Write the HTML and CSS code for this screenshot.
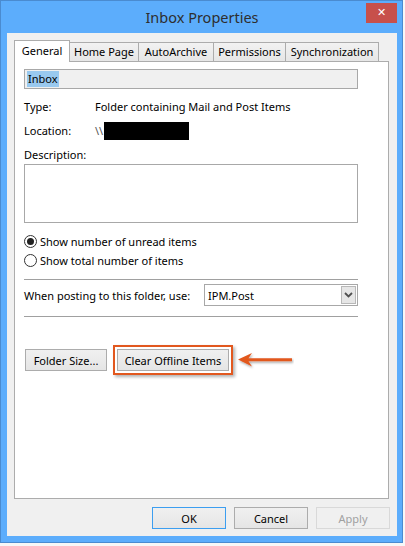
FILE: index.html
```html
<!DOCTYPE html>
<html lang="en">
<head>
    <meta charset="UTF-8">
    <title>Inbox Properties</title>
    <link rel="stylesheet" href="styles.css">
</head>
<body>
    <div class="window">
        <div class="titlebar">
            <span></span>
            <div class="title">Inbox Properties</div>
            <div class="close-wrap"><button class="close">&#x2715;</button></div>
        </div>

        <div class="client">
            <div class="tabs">
                <div class="tab active">General</div>
                <div class="tab">Home Page</div>
                <div class="tab">AutoArchive</div>
                <div class="tab">Permissions</div>
                <div class="tab">Synchronization</div>
            </div>

            <div class="panel">
                <div class="name-field"><span class="selected">Inbox</span></div>

                <div class="info-row">
                    <span class="info-label">Type:</span>
                    <span>Folder containing Mail and Post Items</span>
                </div>
                <div class="info-row">
                    <span class="info-label">Location:</span>
                    <span class="location">\\<span class="redacted"></span></span>
                </div>

                <div class="desc-label">Description:</div>
                <div class="textarea"></div>

                <div class="radio-row first">
                    <span class="radio checked"></span>
                    <span>Show number of unread items</span>
                </div>
                <div class="radio-row">
                    <span class="radio"></span>
                    <span>Show total number of items</span>
                </div>

                <div class="separator"></div>

                <div class="posting-row">
                    <span class="posting-label">When posting to this folder, use:</span>
                    <div class="select">
                        <span>IPM.Post</span>
                        <span class="select-btn">
                            <svg width="9" height="6" viewBox="0 0 9 6"><path d="M1 1 L4.5 4.5 L8 1" fill="none" stroke="#505050" stroke-width="1.8"/></svg>
                        </span>
                    </div>
                </div>

                <div class="separator second"></div>

                <div class="action-row">
                    <button class="btn size-btn">Folder Size...</button>
                    <span class="highlight"><button class="btn clear-btn">Clear Offline Items</button></span>
                    <svg class="arrow" width="58" height="22" viewBox="0 0 58 22">
                        <defs>
                            <filter id="shadow" x="-20%" y="-40%" width="140%" height="200%">
                                <feDropShadow dx="1" dy="1.5" stdDeviation="1" flood-color="#000" flood-opacity="0.35"/>
                            </filter>
                        </defs>
                        <path d="M2 10.5 L16 4 L12.5 9.3 L56 9.3 L56 12.2 L12.5 12.2 L16 17.5 Z" fill="#e2581f" filter="url(#shadow)"/>
                    </svg>
                </div>
            </div>

            <div class="dialog-buttons">
                <button class="btn dlg default">OK</button>
                <button class="btn dlg">Cancel</button>
                <button class="btn dlg" disabled>Apply</button>
            </div>
        </div>
    </div>
</body>
</html>
```

FILE: styles.css
```css
:root {
    --frame: #5cadfc;
    --frame-edge: #4a8bd0;
    --face: #f0f0f0;
    --border: #acacac;
    --text: #000000;
    --orange: #e2581f;
}

* {
    margin: 0;
    padding: 0;
    box-sizing: border-box;
}

body {
    font-family: "Noto Sans", "Open Sans", sans-serif;
    font-size: 11px;
    color: var(--text);
    background: #f7f7f7;
    width: 405px;
    height: 546px;
    overflow: hidden;
}

.window {
    width: 403px;
    height: 543px;
    background: var(--frame);
    border: 1px solid var(--frame-edge);
    padding: 0 5px 6px 6px;
    display: flex;
    flex-direction: column;
}

.titlebar {
    height: 32px;
    display: grid;
    grid-template-columns: 1fr auto 1fr;
}

.title {
    font-size: 14.5px;
    color: #2e2e2e;
    line-height: 33px;
}

.close-wrap {
    display: flex;
    justify-content: flex-end;
    align-items: flex-start;
}

.close {
    margin-top: 2px;
    width: 31px;
    height: 20px;
    border: none;
    background: #c7504b;
    color: #ffffff;
    font-family: "DejaVu Sans", sans-serif;
    font-size: 11px;
    font-weight: bold;
    line-height: 20px;
}

.client {
    flex: 1;
    background: var(--face);
    padding: 7px;
    display: flex;
    flex-direction: column;
}

/* tabs */

.tabs {
    display: flex;
    align-items: flex-end;
    height: 21px;
}

.tab {
    height: 19px;
    line-height: 18px;
    border: 1px solid var(--border);
    border-bottom: none;
    margin-left: -1px;
    background: linear-gradient(#f2f2f2, #e6e6e6);
    white-space: nowrap;
    text-align: center;
}

.tab:nth-child(2) { width: 70px; }
.tab:nth-child(3) { width: 76px; }
.tab:nth-child(4) { width: 73px; }
.tab:nth-child(5) { width: 94px; }

.tab.active {
    width: 56px;
    height: 22px;
    margin-left: 0;
    margin-bottom: -1px;
    line-height: 19px;
    background: #ffffff;
    position: relative;
    z-index: 1;
}

.panel {
    width: 375px;
    height: 438px;
    background: #ffffff;
    border: 1px solid var(--border);
    padding: 0 30px 0 9px;
}

.name-field {
    margin-top: 7px;
    height: 20px;
    background: var(--face);
    border: 1px solid #a8a8a8;
    padding: 1px 2px;
    line-height: 16px;
}

.selected {
    background: #99c9ef;
    display: inline-block;
    padding: 0 1px;
    height: 16px;
}

.info-row {
    height: 24px;
    line-height: 24px;
    display: flex;
}

.name-field + .info-row {
    margin-top: 6px;
}

.info-label {
    width: 71px;
}

.location {
    display: flex;
    align-items: center;
    color: #555;
}

.redacted {
    display: inline-block;
    width: 85px;
    height: 18px;
    background: #000000;
    margin-left: 1px;
}

.desc-label {
    margin-top: 4px;
    line-height: 16px;
    height: 16px;
}

.textarea {
    margin-top: 1px;
    height: 59px;
    border: 1px solid #a8a8a8;
    background: #ffffff;
}

.radio-row {
    height: 19px;
    display: flex;
    align-items: center;
    gap: 3px;
}

.radio-row.first {
    margin-top: 9px;
}

.radio {
    width: 13px;
    height: 13px;
    border: 1px solid #333333;
    border-radius: 50%;
    background: #ffffff;
    display: flex;
    align-items: center;
    justify-content: center;
}

.radio.checked::after {
    content: "";
    width: 7px;
    height: 7px;
    border-radius: 50%;
    background: #222222;
}

.separator {
    margin-top: 9px;
    height: 1px;
    background: #a0a0a0;
}

.separator.second {
    margin-top: 10px;
}

.posting-row {
    margin-top: 4px;
    height: 22px;
    display: flex;
    align-items: center;
}

.posting-label {
    width: 180px;
    white-space: nowrap;
}

.select {
    flex: 1;
    height: 22px;
    border: 1px solid #a8a8a8;
    display: flex;
    align-items: center;
    justify-content: space-between;
    padding: 0 1px 0 3px;
}

.select-btn {
    width: 15px;
    height: 18px;
    background: #e6e6e6;
    border: 1px solid #b8b8b8;
    display: flex;
    align-items: center;
    justify-content: center;
}

.action-row {
    margin-top: 28px;
    height: 30px;
    display: flex;
    align-items: center;
    padding-left: 1px;
}

.btn {
    font-family: inherit;
    font-size: 11px;
    height: 22px;
    padding: 0;
    border: 1px solid var(--border);
    background: linear-gradient(#f0f0f0, #e5e5e5);
    color: var(--text);
}

.size-btn {
    width: 82px;
}

.clear-btn {
    width: 112px;
}

.highlight {
    margin-left: 6px;
    border: 2px solid var(--orange);
    padding: 2px;
    box-shadow: 2px 2px 3px rgba(0, 0, 0, 0.3);
    display: flex;
}

.arrow {
    margin-left: 3px;
}

.dialog-buttons {
    margin-top: 8px;
    display: flex;
    justify-content: flex-end;
    gap: 8px;
}

.btn.dlg {
    width: 74px;
}

.btn.default {
    border-color: #3c9ef0;
}

.btn:disabled {
    color: #a0a0a0;
    border-color: #d9d9d9;
    background: #f0f0f0;
}
```
